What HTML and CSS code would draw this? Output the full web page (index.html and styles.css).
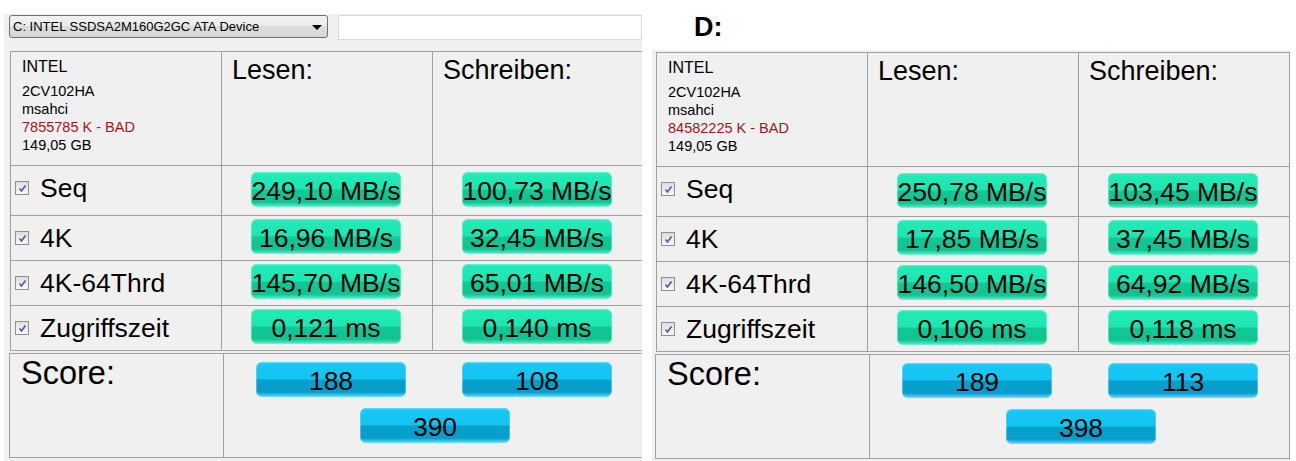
FILE: index.html
```html
<!DOCTYPE html>
<html lang="de">
<head>
	<meta charset="utf-8" />
	<title>AS SSD Benchmark</title>
	<link rel="stylesheet" href="styles.css">
</head>
<body>

	<main>

		<!-- Drive C -->
		<section class="drive drive-c">
			<div class="picker">
				<div class="select">C: INTEL SSDSA2M160G2GC ATA Device<span class="arrow"></span></div>
				<div class="comment"></div>
			</div>

			<div class="bench">
				<div class="info">
					<div class="vendor">INTEL</div>
					<div>2CV102HA</div>
					<div>msahci</div>
					<div class="bad">7855785 K - BAD</div>
					<div>149,05 GB</div>
				</div>
				<div class="head">Lesen:</div>
				<div class="head">Schreiben:</div>

				<div class="test"><span class="check"><svg width="11" height="11" viewBox="0 0 11 11"><path d="M2.5 5.5 L4.5 8 L8.5 2.5" fill="none" stroke="#4b5a9e" stroke-width="1.6"/></svg></span>Seq</div>
				<div class="value"><span class="badge">249,10 MB/s</span></div>
				<div class="value"><span class="badge">100,73 MB/s</span></div>

				<div class="test"><span class="check"><svg width="11" height="11" viewBox="0 0 11 11"><path d="M2.5 5.5 L4.5 8 L8.5 2.5" fill="none" stroke="#4b5a9e" stroke-width="1.6"/></svg></span>4K</div>
				<div class="value"><span class="badge">16,96 MB/s</span></div>
				<div class="value"><span class="badge">32,45 MB/s</span></div>

				<div class="test"><span class="check"><svg width="11" height="11" viewBox="0 0 11 11"><path d="M2.5 5.5 L4.5 8 L8.5 2.5" fill="none" stroke="#4b5a9e" stroke-width="1.6"/></svg></span>4K-64Thrd</div>
				<div class="value"><span class="badge">145,70 MB/s</span></div>
				<div class="value"><span class="badge">65,01 MB/s</span></div>

				<div class="test"><span class="check"><svg width="11" height="11" viewBox="0 0 11 11"><path d="M2.5 5.5 L4.5 8 L8.5 2.5" fill="none" stroke="#4b5a9e" stroke-width="1.6"/></svg></span>Zugriffszeit</div>
				<div class="value"><span class="badge">0,121 ms</span></div>
				<div class="value"><span class="badge">0,140 ms</span></div>
			</div>

			<div class="score">
				<div class="score-title">Score:</div>
				<div class="score-values">
					<div class="score-row">
						<span class="badge blue">188</span>
						<span class="badge blue">108</span>
					</div>
					<div class="score-total"><span class="badge blue">390</span></div>
				</div>
			</div>
		</section>

		<!-- Drive D -->
		<div class="side">
			<h2>D:</h2>
			<section class="drive drive-d">
				<div class="bench">
					<div class="info">
						<div class="vendor">INTEL</div>
						<div>2CV102HA</div>
						<div>msahci</div>
						<div class="bad">84582225 K - BAD</div>
						<div>149,05 GB</div>
					</div>
					<div class="head">Lesen:</div>
					<div class="head">Schreiben:</div>

					<div class="test"><span class="check"><svg width="11" height="11" viewBox="0 0 11 11"><path d="M2.5 5.5 L4.5 8 L8.5 2.5" fill="none" stroke="#4b5a9e" stroke-width="1.6"/></svg></span>Seq</div>
					<div class="value"><span class="badge">250,78 MB/s</span></div>
					<div class="value"><span class="badge">103,45 MB/s</span></div>

					<div class="test"><span class="check"><svg width="11" height="11" viewBox="0 0 11 11"><path d="M2.5 5.5 L4.5 8 L8.5 2.5" fill="none" stroke="#4b5a9e" stroke-width="1.6"/></svg></span>4K</div>
					<div class="value"><span class="badge">17,85 MB/s</span></div>
					<div class="value"><span class="badge">37,45 MB/s</span></div>

					<div class="test"><span class="check"><svg width="11" height="11" viewBox="0 0 11 11"><path d="M2.5 5.5 L4.5 8 L8.5 2.5" fill="none" stroke="#4b5a9e" stroke-width="1.6"/></svg></span>4K-64Thrd</div>
					<div class="value"><span class="badge">146,50 MB/s</span></div>
					<div class="value"><span class="badge">64,92 MB/s</span></div>

					<div class="test"><span class="check"><svg width="11" height="11" viewBox="0 0 11 11"><path d="M2.5 5.5 L4.5 8 L8.5 2.5" fill="none" stroke="#4b5a9e" stroke-width="1.6"/></svg></span>Zugriffszeit</div>
					<div class="value"><span class="badge">0,106 ms</span></div>
					<div class="value"><span class="badge">0,118 ms</span></div>
				</div>

				<div class="score">
					<div class="score-title">Score:</div>
					<div class="score-values">
						<div class="score-row">
							<span class="badge blue">189</span>
							<span class="badge blue">113</span>
						</div>
						<div class="score-total"><span class="badge blue">398</span></div>
					</div>
				</div>
			</section>
		</div>

	</main>

</body>
</html>
```

FILE: styles.css
```css
* {
	font-family: 'Liberation Sans', Arial, sans-serif;
	box-sizing: border-box;
}

body {
	margin: 0;
	padding: 0;
	background: #ffffff;
	color: #000000;
}

main {
	display: flex;
	height: 100vh;
	overflow: hidden;
}


/*Panels*/
.drive {
	width: 638px;
	background: #f0f0f0;
	overflow: hidden;
}
.drive-c {
	margin: 14px 0 0 4px;
	padding: 1px 0 0 5px;
}
.drive-d {
	flex: 1;
	padding: 2px 0 0 3px;
}

.side {
	display: flex;
	flex-direction: column;
	margin-left: 10px;
}
.side h2 {
	height: 50px;
	margin: 0;
	padding: 11px 0 0 42px;
	font-size: 27px;
	line-height: 32px;
	font-weight: bold;
}


/*Drive picker*/
.picker {
	display: flex;
	gap: 10px;
	height: 25px;
	margin-bottom: 11px;
}
.select {
	width: 319px;
	height: 23px;
	padding: 0 5px 0 3px;
	border: 1px solid #707070;
	border-radius: 3px;
	background: linear-gradient(#f2f2f2 0%, #ebebeb 50%, #dddddd 50%, #d6d6d6 100%);
	font-size: 13px;
	line-height: 21px;
	display: flex;
	justify-content: space-between;
	align-items: center;
}
.arrow {
	width: 0;
	height: 0;
	border-left: 5px solid transparent;
	border-right: 5px solid transparent;
	border-top: 5px solid #000000;
	margin-top: 1px;
}
.comment {
	width: 304px;
	height: 25px;
	border: 1px solid #d8d8d8;
	background: #ffffff;
}


/*Results grid*/
.bench {
	display: grid;
	grid-template-columns: 211px 211px 211px;
	grid-template-rows: 114px 50px 45px 45px 45px;
	width: 634px;
	margin-left: 1px;
	border-right: 1px solid #a0a0a0;
	border-bottom: 1px solid #a0a0a0;
}
.bench > div {
	border-left: 1px solid #a0a0a0;
	border-top: 1px solid #a0a0a0;
}

.info {
	padding: 5px 0 0 11px;
	font-size: 14.5px;
	line-height: 18px;
}
.info .vendor {
	font-size: 16px;
	line-height: 20px;
	margin-bottom: 5px;
}
.info .bad {
	color: #a21818;
}

.head {
	padding: 2px 0 0 10px;
	font-size: 27px;
	line-height: 32px;
}

.test {
	display: flex;
	align-items: flex-start;
	padding: 7px 0 0 4px;
	font-size: 26.5px;
	line-height: 30px;
}
.check {
	width: 14px;
	height: 14px;
	margin: 8px 11px 0 0;
	border: 1px solid #8e8f8f;
	background: linear-gradient(#dedede, #f8f8f8);
	display: flex;
	align-items: center;
	justify-content: center;
}
.check svg {
	display: block;
}

.value {
	display: flex;
	align-items: center;
	padding: 0 0 3px 29px;
}


/*Badges*/
.badge {
	display: block;
	width: 150px;
	height: 35px;
	padding-top: 4px;
	border-radius: 6px;
	background: linear-gradient(#34f2c4 0%, #20eab6 8%, #1ee6b2 48%, #12c896 52%, #10c391 86%, #5ff0d0 100%);
	box-shadow: inset 0 0 0 1px rgba(120, 250, 215, 0.55);
	text-align: center;
	font-size: 26.5px;
	line-height: 31px;
	white-space: nowrap;
}
.badge.blue {
	background: linear-gradient(#2ad4fb 0%, #16c7f6 8%, #14c4f3 48%, #07a0cd 52%, #069dca 86%, #66dcff 100%);
	box-shadow: inset 0 0 0 1px rgba(120, 220, 255, 0.55);
}


/*Score*/
.score {
	display: grid;
	grid-template-columns: 214px 1fr;
	width: 635px;
	height: 105px;
	margin-top: 2px;
	border: 1px solid #a0a0a0;
}
.score-title {
	border-right: 1px solid #a0a0a0;
	padding: 1px 0 0 11px;
	font-size: 32.5px;
	line-height: 37px;
}
.score-values {
	display: flex;
	flex-direction: column;
	gap: 11px;
	padding: 8px 0 0 32px;
}
.score-row {
	display: flex;
	gap: 56px;
}
.score-total {
	padding-left: 104px;
}
```
